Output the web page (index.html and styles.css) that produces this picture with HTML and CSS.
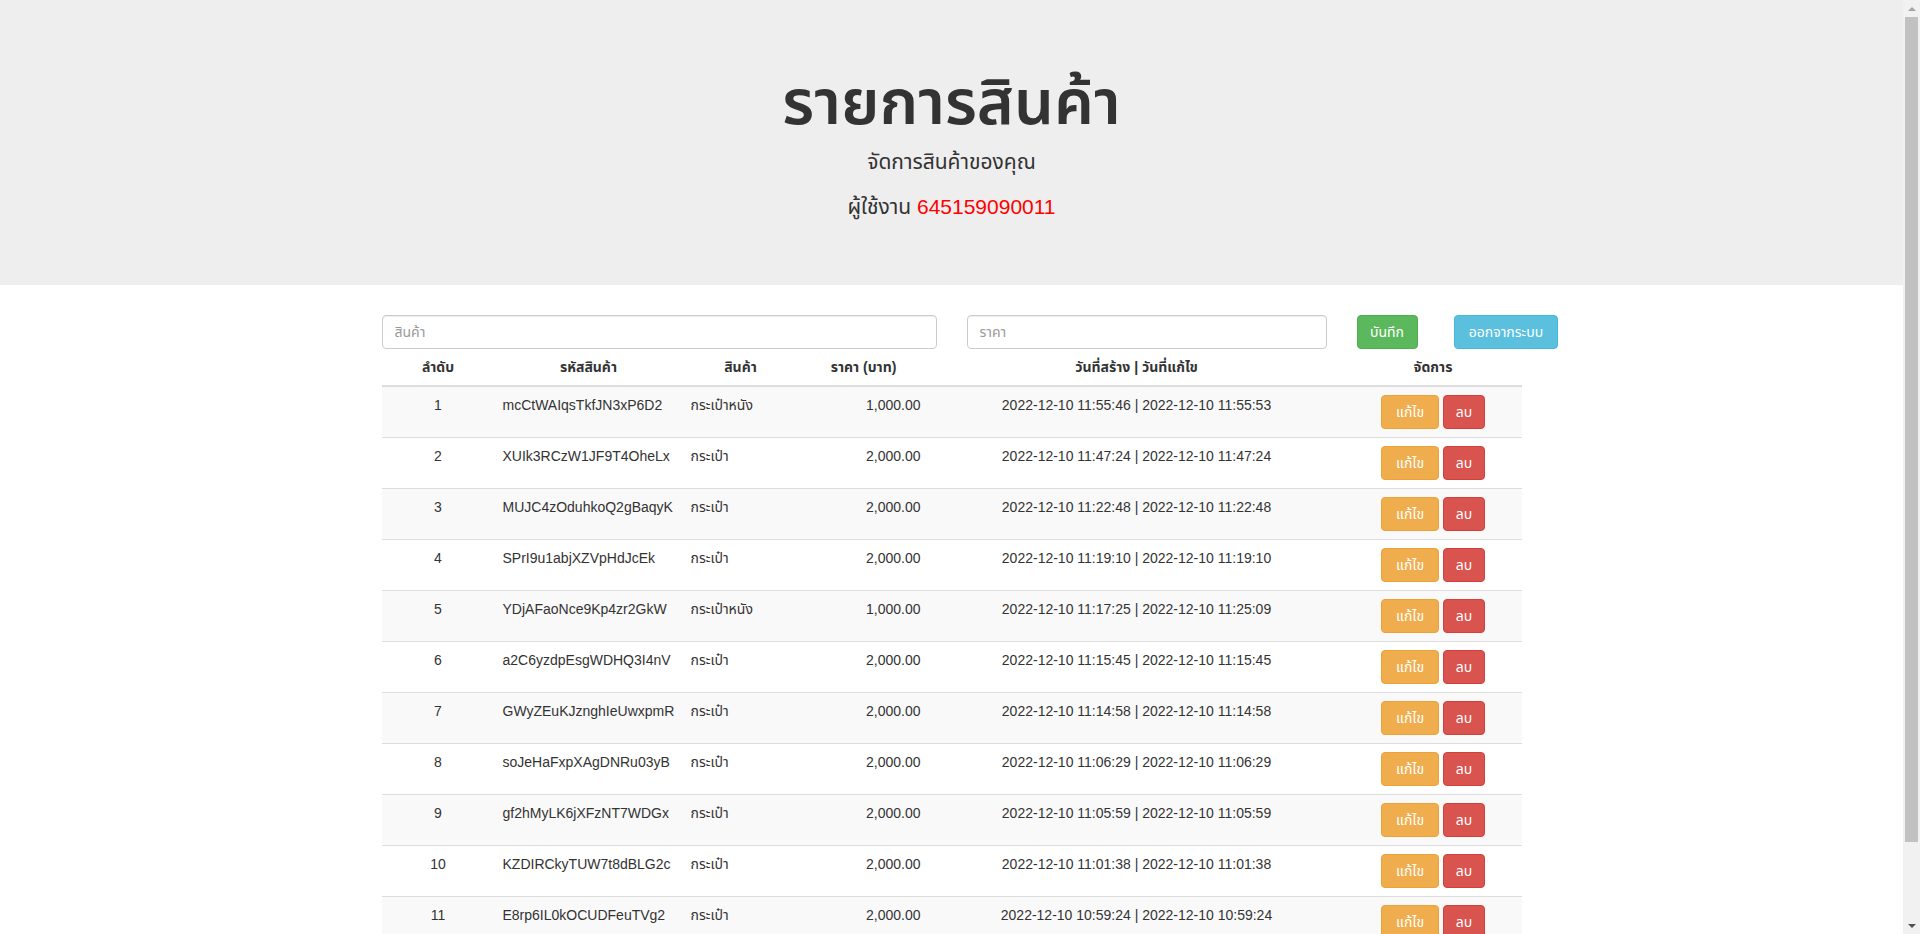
FILE: index.html
```html
<!DOCTYPE html>
<html lang="th">
<head>
<meta charset="utf-8">
<title>รายการสินค้า</title>
<link rel="stylesheet" href="styles.css">
</head>
<body>
<div class="page">
  <div class="jumbotron">
    <div class="container">
      <h1>รายการสินค้า</h1>
      <p>จัดการสินค้าของคุณ</p>
      <p>ผู้ใช้งาน <span class="user-id">645159090011</span></p>
    </div>
  </div>
  <div class="container">
    <form class="form-row">
      <div class="col"><input class="form-control" type="text" placeholder="สินค้า"></div>
      <div class="col"><input class="form-control" type="text" placeholder="ราคา"></div>
      <div class="col"><button type="button" class="btn btn-success">บันทึก</button></div>
      <div class="col"><button type="button" class="btn btn-info">ออกจากระบบ</button></div>
    </form>
    <table class="table">
      <thead>
        <tr>
          <th class="w-no">ลำดับ</th>
          <th class="w-code">รหัสสินค้า</th>
          <th class="w-name">สินค้า</th>
          <th class="w-price">ราคา (บาท)</th>
          <th class="w-date">วันที่สร้าง | วันที่แก้ไข</th>
          <th class="w-act">จัดการ</th>
        </tr>
      </thead>
      <tbody>
        <tr><td class="c-no">1</td><td class="c-code">mcCtWAIqsTkfJN3xP6D2</td><td class="c-name">กระเป๋าหนัง</td><td class="c-price">1,000.00</td><td class="c-date">2022-12-10 11:55:46 | 2022-12-10 11:55:53</td><td class="c-act"><button class="btn btn-warning btn-edit">แก้ไข</button> <button class="btn btn-danger btn-del">ลบ</button></td></tr>
        <tr><td class="c-no">2</td><td class="c-code">XUIk3RCzW1JF9T4OheLx</td><td class="c-name">กระเป๋า</td><td class="c-price">2,000.00</td><td class="c-date">2022-12-10 11:47:24 | 2022-12-10 11:47:24</td><td class="c-act"><button class="btn btn-warning btn-edit">แก้ไข</button> <button class="btn btn-danger btn-del">ลบ</button></td></tr>
        <tr><td class="c-no">3</td><td class="c-code">MUJC4zOduhkoQ2gBaqyK</td><td class="c-name">กระเป๋า</td><td class="c-price">2,000.00</td><td class="c-date">2022-12-10 11:22:48 | 2022-12-10 11:22:48</td><td class="c-act"><button class="btn btn-warning btn-edit">แก้ไข</button> <button class="btn btn-danger btn-del">ลบ</button></td></tr>
        <tr><td class="c-no">4</td><td class="c-code">SPrI9u1abjXZVpHdJcEk</td><td class="c-name">กระเป๋า</td><td class="c-price">2,000.00</td><td class="c-date">2022-12-10 11:19:10 | 2022-12-10 11:19:10</td><td class="c-act"><button class="btn btn-warning btn-edit">แก้ไข</button> <button class="btn btn-danger btn-del">ลบ</button></td></tr>
        <tr><td class="c-no">5</td><td class="c-code">YDjAFaoNce9Kp4zr2GkW</td><td class="c-name">กระเป๋าหนัง</td><td class="c-price">1,000.00</td><td class="c-date">2022-12-10 11:17:25 | 2022-12-10 11:25:09</td><td class="c-act"><button class="btn btn-warning btn-edit">แก้ไข</button> <button class="btn btn-danger btn-del">ลบ</button></td></tr>
        <tr><td class="c-no">6</td><td class="c-code">a2C6yzdpEsgWDHQ3I4nV</td><td class="c-name">กระเป๋า</td><td class="c-price">2,000.00</td><td class="c-date">2022-12-10 11:15:45 | 2022-12-10 11:15:45</td><td class="c-act"><button class="btn btn-warning btn-edit">แก้ไข</button> <button class="btn btn-danger btn-del">ลบ</button></td></tr>
        <tr><td class="c-no">7</td><td class="c-code">GWyZEuKJznghIeUwxpmR</td><td class="c-name">กระเป๋า</td><td class="c-price">2,000.00</td><td class="c-date">2022-12-10 11:14:58 | 2022-12-10 11:14:58</td><td class="c-act"><button class="btn btn-warning btn-edit">แก้ไข</button> <button class="btn btn-danger btn-del">ลบ</button></td></tr>
        <tr><td class="c-no">8</td><td class="c-code">soJeHaFxpXAgDNRu03yB</td><td class="c-name">กระเป๋า</td><td class="c-price">2,000.00</td><td class="c-date">2022-12-10 11:06:29 | 2022-12-10 11:06:29</td><td class="c-act"><button class="btn btn-warning btn-edit">แก้ไข</button> <button class="btn btn-danger btn-del">ลบ</button></td></tr>
        <tr><td class="c-no">9</td><td class="c-code">gf2hMyLK6jXFzNT7WDGx</td><td class="c-name">กระเป๋า</td><td class="c-price">2,000.00</td><td class="c-date">2022-12-10 11:05:59 | 2022-12-10 11:05:59</td><td class="c-act"><button class="btn btn-warning btn-edit">แก้ไข</button> <button class="btn btn-danger btn-del">ลบ</button></td></tr>
        <tr><td class="c-no">10</td><td class="c-code">KZDIRCkyTUW7t8dBLG2c</td><td class="c-name">กระเป๋า</td><td class="c-price">2,000.00</td><td class="c-date">2022-12-10 11:01:38 | 2022-12-10 11:01:38</td><td class="c-act"><button class="btn btn-warning btn-edit">แก้ไข</button> <button class="btn btn-danger btn-del">ลบ</button></td></tr>
        <tr><td class="c-no">11</td><td class="c-code">E8rp6IL0kOCUDFeuTVg2</td><td class="c-name">กระเป๋า</td><td class="c-price">2,000.00</td><td class="c-date">2022-12-10 10:59:24 | 2022-12-10 10:59:24</td><td class="c-act"><button class="btn btn-warning btn-edit">แก้ไข</button> <button class="btn btn-danger btn-del">ลบ</button></td></tr>
        <tr><td class="c-no">12</td><td class="c-code">Qm7TxR2bNcV0pLsZ4eWa</td><td class="c-name">กระเป๋า</td><td class="c-price">2,000.00</td><td class="c-date">2022-12-10 10:52:13 | 2022-12-10 10:52:13</td><td class="c-act"><button class="btn btn-warning btn-edit">แก้ไข</button> <button class="btn btn-danger btn-del">ลบ</button></td></tr>
      </tbody>
    </table>
  </div>
</div>
<div class="scrollbar" aria-hidden="true">
  <div class="sb-btn"><span class="sb-arrow-up"></span></div>
  <div class="sb-track"><div class="sb-thumb"></div></div>
  <div class="sb-btn"><span class="sb-arrow-down"></span></div>
</div>
</body>
</html>
```
FILE: styles.css
```css
* { box-sizing: border-box; }
html { font-size: 10px; scrollbar-width: none; }
html::-webkit-scrollbar { display: none; }
body {
  margin: 0;
  font-family: "Liberation Sans", Arial, "Noto Sans Thai", Tahoma, sans-serif;
  font-size: 14px;
  line-height: 1.42857143;
  color: #333;
  background: #fff;
}
.page { margin-right: 17px; }

/* window scrollbar */
.scrollbar {
  position: fixed;
  top: 0;
  right: 0;
  width: 17px;
  height: 100vh;
  background: #f1f1f1;
  display: flex;
  flex-direction: column;
}
.sb-btn {
  height: 17px;
  flex: none;
  display: flex;
  align-items: center;
  justify-content: center;
}
.sb-arrow-up {
  width: 0; height: 0;
  border-left: 4px solid transparent;
  border-right: 4px solid transparent;
  border-bottom: 4px solid #a3a3a3;
}
.sb-arrow-down {
  width: 0; height: 0;
  border-left: 4px solid transparent;
  border-right: 4px solid transparent;
  border-top: 4px solid #505050;
}
.sb-track { flex: 1; padding: 0 2px; }
.sb-thumb { height: 825px; background: #c1c1c1; }

.container {
  width: 1170px;
  margin: 0 auto;
  padding: 0 15px;
}
.jumbotron {
  background: #eee;
  padding: 48px 0;
  margin-bottom: 30px;
  text-align: center;
}
.jumbotron .container { padding-top: 0.1px; }
.jumbotron h1 {
  font-size: 63px;
  font-weight: 600;
  line-height: 1.1;
  margin: 20px 0 10px;
}
.jumbotron p {
  font-size: 21px;
  font-weight: 400;
  margin: 0 0 15px;
}
.user-id { color: #f00; }

.form-row {
  display: grid;
  grid-template-columns: 585px 390px 97.5px 97.5px;
  margin: 0 -15px;
}
.col { padding: 0 15px; }
.form-control {
  display: block;
  width: 100%;
  height: 34px;
  padding: 6px 12px;
  font-family: inherit;
  font-size: 14px;
  line-height: 1.42857143;
  color: #555;
  background: #fff;
  border: 1px solid #ccc;
  border-radius: 4px;
  box-shadow: inset 0 1px 1px rgba(0,0,0,.075);
}
.form-control::placeholder { color: #999; }

.btn {
  display: inline-block;
  height: 34px;
  padding: 6px 12px;
  font-family: inherit;
  font-size: 14px;
  line-height: 20px;
  color: #fff;
  border: 1px solid transparent;
  border-radius: 4px;
  white-space: nowrap;
  text-align: center;
  cursor: pointer;
}
.btn-success { background: #5cb85c; border-color: #4cae4c; width: 61px; padding: 6px 0; }
.btn-info { background: #5bc0de; border-color: #46b8da; width: 104px; padding: 6px 0; }
.btn-warning { background: #f0ad4e; border-color: #eea236; }
.btn-danger { background: #d9534f; border-color: #d43f3a; }
.btn-edit { width: 58px; padding: 6px 0; }
.btn-del { width: 42px; padding: 6px 0; }

.table {
  width: 100%;
  border-collapse: collapse;
  border-spacing: 0;
  table-layout: fixed;
  margin-bottom: 20px;
}
.table th, .table td {
  padding: 8px;
  line-height: 1.42857143;
  vertical-align: top;
  border-top: 1px solid #ddd;
}
.table thead th {
  vertical-align: bottom;
  border-top: 0;
  border-bottom: 2px solid #ddd;
  text-align: center;
  font-weight: bold;
}
.table tbody tr:nth-of-type(odd) { background: #f9f9f9; }

.w-no { width: 113px; }
.w-code { width: 188px; }
.w-name { width: 116px; }
.w-price { width: 130px; }
.w-date { width: 416px; }
.w-act { width: 177px; }

.c-no { text-align: center; }
.c-code { text-align: left; white-space: nowrap; }
.c-name { text-align: left; }
.c-price { text-align: right; }
.c-date { text-align: center; }
.c-act { text-align: center; white-space: nowrap; }
```
